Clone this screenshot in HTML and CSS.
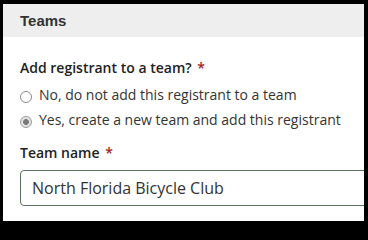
FILE: index.html
```html
<!DOCTYPE html>
<html lang="en">
<head>
<meta charset="utf-8">
<title>Teams</title>
<link rel="stylesheet" href="styles.css">
</head>
<body>
<div class="frame">
  <section class="panel">
    <header class="panel-head">Teams</header>
    <div class="panel-body">
      <div class="field-label">Add registrant to a team? <span class="req">*</span></div>
      <div class="options">
        <div class="option"><span class="radio"></span><span>No, do not add this registrant to a team</span></div>
        <div class="option"><span class="radio checked"></span><span>Yes, create a new team and add this registrant</span></div>
      </div>
      <div class="field-label team-label">Team name <span class="req">*</span></div>
      <div class="text-input">North Florida Bicycle Club</div>
    </div>
  </section>
</div>
</body>
</html>
```

FILE: styles.css
```css
html, body {
  margin: 0;
  background: #000;
  height: 226px;
  overflow: hidden;
}

.frame {
  padding: 4px 4px 5px 3px;
}

.panel {
  height: 217px;
  background: #fff;
  overflow: hidden;
}

.panel-head {
  height: 33px;
  line-height: 34px;
  background: #eeeeee;
  padding-left: 17px;
  font-family: "Liberation Sans", Arial, sans-serif;
  font-weight: bold;
  font-size: 15px;
  color: #333;
}

.panel-body {
  padding: 21px 0 0 17px;
}

.field-label {
  font-family: "Open Sans", sans-serif;
  font-weight: 600;
  font-size: 14px;
  line-height: 20px;
  color: #222;
}

.req {
  color: #a21c1c;
  margin-left: 2px;
}

.options {
  margin-top: 4px;
}

.option {
  display: flex;
  align-items: center;
  height: 25px;
  font-family: "Open Sans", sans-serif;
  font-size: 14px;
  line-height: 25px;
  color: #333;
  white-space: nowrap;
}

.radio {
  flex: none;
  width: 12px;
  height: 12px;
  box-sizing: border-box;
  border: 1px solid #8a8a8a;
  border-radius: 50%;
  margin-top: 4px;
  margin-right: 7px;
  background: #fff;
}

.radio.checked {
  border-color: #9a9a9a;
  background: radial-gradient(circle at center, #7a7a7a 0, #7a7a7a 2.6px, #e4e4e4 3.2px);
}

.team-label {
  margin-top: 11px;
}

.text-input {
  margin-top: 7px;
  width: 400px;
  height: 36px;
  box-sizing: border-box;
  border: 1px solid #5e715e;
  border-radius: 4px;
  padding-left: 11px;
  font-family: "Open Sans", sans-serif;
  font-size: 16px;
  line-height: 34px;
  color: #333;
  white-space: nowrap;
}
```
